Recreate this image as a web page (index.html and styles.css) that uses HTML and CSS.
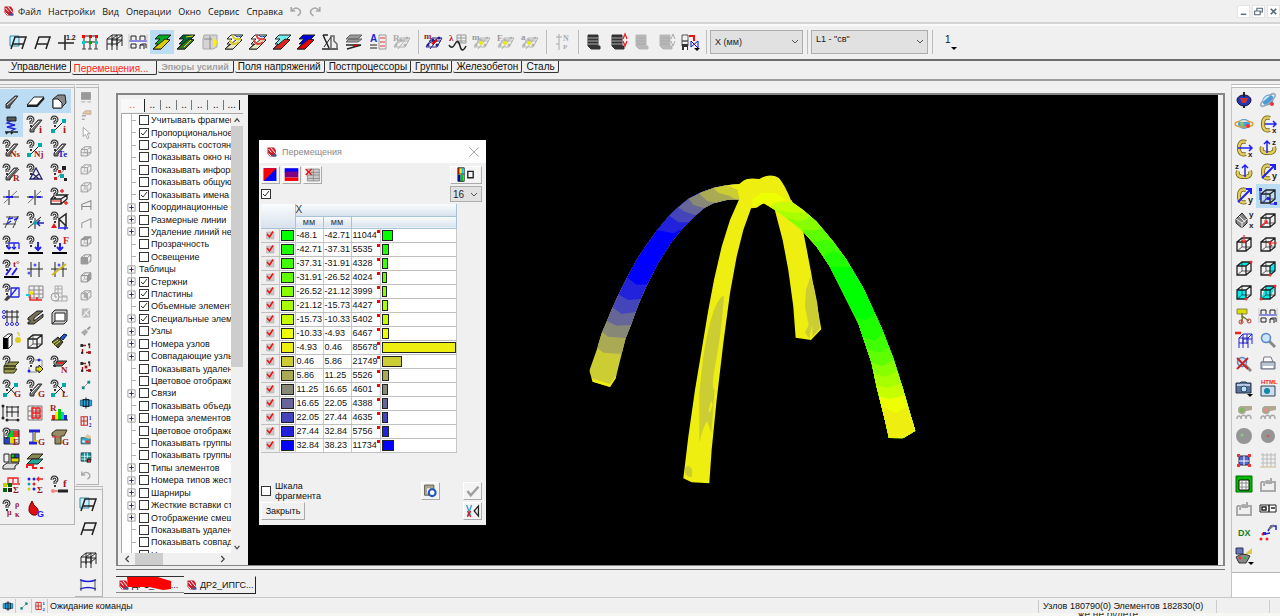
FILE: index.html
```html
<!DOCTYPE html>
<html lang="ru">
  <head>
    <meta charset="utf-8">
    <title>Перемещения</title>
    <link rel="stylesheet" href="styles.css">
  </head>
  <body>
    <header class="menubar">
      <span class="logo" data-icon="logo"></span>
      <button class="menu">Файл</button>
      <button class="menu">Настройки</button>
      <button class="menu">Вид</button>
      <button class="menu">Операции</button>
      <button class="menu">Окно</button>
      <button class="menu">Сервис</button>
      <button class="menu">Справка</button>
      <div class="history" data-tools="undo redo"></div>
      <div class="window-buttons" data-tools="minimize restore close"></div>
    </header>

    <div class="toolbar">
      <div class="group" data-tools="frameBlue frame axis nodes grid3d frames4 stripGreen* stripDark boxYellow isoYellow isoRed stripCyan stripBlue graph layers letterA letterR"></div>
      <div class="group" data-tools="massM wave massGrey forceGrey accGrey"></div>
      <div class="group" data-tools="normal"></div>
      <div class="group" data-tools="film filmRed filmGrey filmGreyA saveNodes"></div>
      <div class="group"><select class="combo" aria-label="Направление"><option>X (мм)</option></select></div>
      <div class="group"><select class="combo combo-wide" aria-label="Загружение"><option>L1 - "св"</option></select></div>
      <button class="number">1<span class="drop"></span></button>
    </div>

    <nav class="tabs">
      <button class="tab">Управление</button>
      <button class="tab tab-active">Перемещения...</button>
      <button class="tab tab-disabled" disabled>Эпюры усилий</button>
      <button class="tab">Поля напряжений</button>
      <button class="tab">Постпроцессоры</button>
      <button class="tab">Группы</button>
      <button class="tab">Железобетон</button>
      <button class="tab">Сталь</button>
    </nav>

    <main class="work">
      <aside class="palette palette-left">
        <div class="palette-grid" data-tools="bar* plate* solid* spring* askBarI askNodeI askNs askNj askTe askR askTri askNodes cross crossBlue askBox axes3 askArrow askSupport askLoad askDown askF askTemp nodes2 nodes2y askMove gridRed clockGrid gridBlue beam cubeSolid bulb cube brush askLayers askCopy askN askG1 askG2 askL gridDims gridRed2 chartR askE beamG beamT press layersRed"></div>
        <div class="palette-grid" data-tools="sumRed sumGrid askf mu drop"></div>
      </aside>
      <div class="palette-column">
        <aside class="palette palette-narrow" data-tools="screen handG pointer wire1 wire2 wire3 wall1 wall2 cubeTop cubeFront cubeSide cubeMid cutBox brushG swap1 swap2 link boxCyan numGrid tableHand tableCyan undo"></aside>
        <aside class="palette palette-frames" data-tools="frameBlue frame grid3d deform"></aside>
      </div>

      <div class="desktop">
        <section class="document">
          <div class="side">
            <div class="side-tabs">
              <button class="side-tab side-tab-active">..</button>
              <button class="side-tab">..</button>
              <button class="side-tab">..</button>
              <button class="side-tab">..</button>
              <button class="side-tab">..</button>
              <button class="side-tab">..</button>
              <button class="side-tab">...</button>
            </div>
            <div class="tree-box">
              <ul class="tree"></ul>
              <div class="scroll scroll-y"><span data-icon="up"></span><i class="thumb"></i><span data-icon="down"></span></div>
            </div>
            <div class="scroll scroll-x"><span data-icon="left"></span><i class="thumb"></i><span data-icon="right"></span></div>
          </div>

          <div class="viewport">
            <svg class="model" viewBox="0 0 970 470" preserveAspectRatio="xMidYMid slice">
              <defs>
                <clipPath id="leg-left"><path d="M515 72L470 76 430 84 395 97 355 117 325 142 298 167 262 210 225 262 200 300 170 355 145 405 127 445 110 485 95 520 80 570 58 632 68 665 120 681 137 655 155 582 167 535 183 495 197 455 213 415 232 373 265 308 305 245 335 208 375 168 402 145 430 130 470 120 515 118z"/></clipPath>
                <clipPath id="leg-right"><path d="M560 100L625 105 665 125 700 150 740 185 790 245 830 300 880 385 910 450 935 505 970 595 1000 690 1020 760 1036 812 998 835 957 834 945 780 920 680 905 610 885 550 865 490 820 400 780 320 740 260 697 212 650 175 610 147 580 130 545 143z"/></clipPath>
              </defs>
              <g transform="translate(322 65) scale(.3333)">
                <!-- back leg -->
                <path fill="#eeee11" d="M613 145L665 120 700 215 722 330 740 430 754 508 723 540 677 533 670 440 655 330 638 240z"/>
                <path fill="#cccc33" d="M721 350L732 380 742 430 750 505 728 530 726 495 718 535 705 518 716 495 705 440 708 390z"/>
                <!-- left leg, bottom to top -->
                <g clip-path="url(#leg-left)">
                  <path fill="#cccc33" d="M0 0H600V700H0z"/>
                  <path fill="#eeee11" d="M50 625L64 655 120 672 140 645V690H50z"/>
                  <path fill="#aaaa55" d="M83 0V565L100 578 160 583H600V0z"/>
                  <path fill="#888877" d="M96 0V515L115 530 172 535H600V0z"/>
                  <path fill="#666699" d="M108 0V482L140 497 188 495H600V0z"/>
                  <path fill="#4444bb" d="M125 0V440L155 462 202 455H600V0z"/>
                  <path fill="#2222dd" d="M143 0V402L175 420 218 416H600V0z"/>
                  <path fill="#0000ff" d="M168 0V350L200 374 238 373H600V0z"/>
                  <path fill="#2222dd" d="M262 0V210L310 220 340 204H600V0z"/>
                  <path fill="#4444bb" d="M296 0V166L325 187 358 187H600V0z"/>
                  <path fill="#666699" d="M324 0V142L345 155 378 166H600V0z"/>
                  <path fill="#888877" d="M355 0V115L370 135 405 145H600V0z"/>
                  <path fill="#aaaa55" d="M386 0V98L410 122 440 130H600V0z"/>
                  <path fill="#cccc33" d="M430 0V84L445 98 480 108 500 120H600V0z"/>
                  <path fill="#eeee11" d="M472 0V76L500 88 520 110H600V0z"/>
                </g>
                <!-- front leg -->
                <path fill="#eeee11" d="M510 112L480 180 455 260 432 360 415 450 395 570 375 690 355 830 340 955 365 967 418 970 425 870 440 720 460 550 480 400 500 290 520 210 545 140z"/>
                <path fill="#cccc33" d="M462 408Q450 405 430 455Q412 510 400 590L388 700 388 850Q398 800 412 784L424 820 434 690Q426 690 430 650Q455 520 462 408zM345 925Q355 910 366 928V950Q355 955 345 940z"/>
                <path fill="#eeee11" d="M424 722L428 735 419 760 416 750z"/>
                <!-- right leg, top to bottom -->
                <g clip-path="url(#leg-right)">
                  <path fill="#eeff00" d="M0 0H1110V1020H0z"/>
                  <path fill="#c8ff00" d="M0 140H600L620 124 665 122H1110V1020H0z"/>
                  <path fill="#a8ff00" d="M0 148H615L650 157 690 158H1110V1020H0z"/>
                  <path fill="#88ff00" d="M0 172H645L690 185 720 172H1110V1020H0z"/>
                  <path fill="#60ff00" d="M0 210H695L740 210 760 204H1110V1020H0z"/>
                  <path fill="#40ff00" d="M0 248H730L765 238 795 246H1110V1020H0z"/>
                  <path fill="#20ff00" d="M0 290H755L790 272 825 288H1110V1020H0z"/>
                  <path fill="#00ff00" d="M0 320H780L845 322H1110V1020H0z"/>
                  <path fill="#20ff00" d="M0 475H860L890 480 915 460H1110V1020H0z"/>
                  <path fill="#40ff00" d="M0 530H875L915 542 942 515H1110V1020H0z"/>
                  <path fill="#60ff00" d="M0 568H890L930 578 960 562H1110V1020H0z"/>
                  <path fill="#88ff00" d="M0 608H903L940 618 975 598H1110V1020H0z"/>
                  <path fill="#a8ff00" d="M0 640H910L945 651 985 632H1110V1020H0z"/>
                  <path fill="#c8ff00" d="M0 675H918L955 685 995 670H1110V1020H0z"/>
                  <path fill="#eeff00" d="M0 708H926L960 718 1005 705H1110V1020H0z"/>
                  <path fill="#eeee11" d="M0 738H935L975 760 1015 738H1110V1020H0z"/>
                </g>
                <!-- hub -->
                <path fill="#eeee11" d="M505 74L520 62Q535 52 568 57Q600 38 627 54Q645 75 665 125L620 127 580 130 560 143 545 145 510 118 503 95z"/>
                <path fill="#eeff00" d="M547 118L575 98 620 100 650 120 620 127 580 130 560 139 547 137z"/>
              </g>
            </svg>

            <section class="dialog">
              <header class="dialog-title">
                <span class="logo" data-icon="logo"></span>
                <h1>Перемещения</h1>
                <button class="dialog-close" aria-label="Закрыть окно" data-icon="cross2"></button>
              </header>
              <div class="dialog-body">
                <div class="dialog-row">
                  <div class="raised" data-tools="diag bands noTable"></div>
                  <div class="raised raised-wide" data-tools="palette"></div>
                </div>
                <div class="dialog-row">
                  <input type="checkbox" class="check" checked aria-label="Включить все">
                  <select class="combo combo-small" aria-label="Количество цветов"><option>16</option></select>
                </div>
                <table class="scale">
                  <colgroup><col class="c-check"><col class="c-swatch"><col class="c-num"><col class="c-num"><col class="c-count"><col></colgroup>
                  <thead>
                    <tr><th colspan="2" rowspan="2"></th><th colspan="4" class="axis">X</th></tr>
                    <tr><th>мм</th><th>мм</th><th colspan="2"></th></tr>
                  </thead>
                  <tbody></tbody>
                </table>
                <div class="dialog-foot">
                  <label class="fragment"><input type="checkbox" class="check"><span>Шкала фрагмента</span></label>
                  <div class="raised raised-settings" data-tools="settings"></div>
                  <div class="raised" data-tools="apply"></div>
                </div>
                <div class="dialog-row">
                  <button class="push">Закрыть</button>
                  <div class="raised" data-tools="scissors"></div>
                </div>
              </div>
            </section>
          </div>
        </section>

        <div class="doc-tabs">
          <button class="doc-tab"><span class="logo" data-icon="logo"></span>ДР1_ИГА...
            <svg class="scribble" viewBox="0 0 46 16"><path fill="#f00" d="M0 2L27 1 44 6 44 14 36 15 22 12 1 12z"/></svg>
          </button>
          <button class="doc-tab doc-tab-active"><span class="logo" data-icon="logo"></span>ДР2_ИПГС...</button>
        </div>
      </div>

      <aside class="palette palette-right">
        <div class="palette-grid" data-tools="top planet planet2 rotX1 rotX2 rotZ1 rotZ2 rotY1 rotY2 isoView* isoXY projFront projTop projSide cubeC1 cubeC2 cubeC3 cubeC4 cutter frames4 gridMove zoom zoomOff printer camera cameraHtml ring1 ring2 disc1 disc2 fit dots greenGrid folder1 folder2 panel dx clip palette2"></div>
      </aside>
    </main>

    <footer class="status">
      <div class="status-tools" data-tools="boxCyan link numGrid"></div>
      <span class="status-text">Ожидание команды</span>
      <span class="status-count">Узлов 180790(0) Элементов 182830(0)</span>
      <span class="status-cell"></span>
      <span class="status-end"></span>
    </footer>
    <div class="behind"><span>же не будете</span></div>

    <script src="icons.js"></script>
    <script src="app.js"></script>
  </body>
</html>
```

FILE: styles.css
```css
* {
  box-sizing: border-box;
}
body {
  margin: 0;
  height: 100vh;
  display: flex;
  flex-direction: column;
  background: #f0f0f0;
  color: #111;
  font-family: "Liberation Sans", Arial, sans-serif;
  font-size: 10px;
  overflow: hidden;
}
button {
  font: inherit;
  color: inherit;
  background: none;
  border: none;
  padding: 0;
  white-space: nowrap;
}
svg {
  display: block;
}
.logo {
  width: 10px;
  height: 10px;
  flex: none;
}
.tool {
  width: 24px;
  height: 24px;
  display: flex;
  align-items: center;
  justify-content: center;
  flex: none;
}
.tool svg {
  width: 20px;
  height: 20px;
}
.tool-on {
  background: #bcdcf4;
}

/* menu */
.menubar {
  height: 24px;
  flex: none;
  display: flex;
  align-items: center;
  padding-left: 4px;
  border-bottom: 2px solid #d4d4d4;
  font-family: "Open Sans", sans-serif;
  font-size: 9px;
}
.menu {
  margin-left: 7px;
}
.menubar .logo + .menu {
  margin-left: 4px;
}
.history {
  display: flex;
  margin-left: 4px;
}
.history .tool {
  width: 19px;
}
.history .tool svg {
  width: 16px;
  height: 16px;
}
.window-buttons {
  display: flex;
  gap: 2px;
  margin-left: auto;
}
.window-buttons .tool {
  width: 13px;
  height: 13px;
  background: #fff;
  border: 1px solid #e4e4e4;
}
.window-buttons svg {
  width: 11px;
  height: 11px;
}

/* main toolbar */
.toolbar {
  height: 37px;
  flex: none;
  display: flex;
  align-items: center;
  padding: 0 0 2px 6px;
  border-top: 2px solid #fafafa;
  border-bottom: 2px solid #6e6e6e;
}
.group {
  display: flex;
  align-items: center;
  height: 24px;
  padding-right: 4px;
  margin-right: 3px;
  border-right: 1px solid #bdbdbd;
}
.combo {
  width: 93px;
  height: 24px;
  padding: 0 4px;
  color: #222;
  font: 9px "Liberation Sans", Arial, sans-serif;
  border: 1px solid #adadad;
  border-radius: 0;
  appearance: none;
  background: #e1e1e1 url("data:image/svg+xml,%3Csvg xmlns='http://www.w3.org/2000/svg' width='8' height='5'%3E%3Cpath d='M1 1l3 3 3-3' fill='none' stroke='%23555'/%3E%3C/svg%3E") no-repeat right 3px center;
}
.combo-wide {
  width: 117px;
  padding-bottom: 6px;
}
.number {
  display: flex;
  align-items: flex-start;
  height: 16px;
  margin-left: 9px;
}
.drop {
  align-self: flex-end;
  border: 3px solid transparent;
  border-top-color: #000;
  border-bottom: none;
}

/* tabs under the toolbar */
.tabs {
  height: 20px;
  flex: none;
  display: flex;
  align-items: flex-start;
  padding-left: 8px;
  border-bottom: 2px solid #9c9c9c;
}
.tab {
  height: 12px;
  padding: 0 3px;
  margin-right: 1px;
  line-height: 10px;
  border-right: 1px solid #333;
  border-bottom: 1px solid #333;
  border-radius: 0 0 2px 2px;
}
.tab-active {
  height: 14px;
  padding: 2px 8px 0 2px;
  color: #f22;
}
.tab-disabled {
  padding: 0 4px 0 3px;
  color: #a0a0a0;
  font-weight: bold;
  font-size: 9px;
}

/* work area */
.work {
  flex: 1;
  min-height: 0;
  display: flex;
  align-items: flex-start;
  padding-top: 3px;
}
.palette {
  border-top: 4px double #bbb;
  border-right: 1px solid #b5b5b5;
  border-bottom: 1px solid #b5b5b5;
}
.palette-grid {
  display: grid;
  grid-template-columns: repeat(3, 24px);
}
.palette-left {
  width: 75px;
  padding: 1px 0 3px;
}
.palette-left .palette-grid {
  margin-left: -1px;
}
.palette-column {
  width: 30px;
  flex: none;
}
.palette-narrow {
  width: 23px;
  margin-left: 1px;
}
.palette-narrow .tool {
  width: 20px;
  height: 18px;
}
.palette-narrow svg {
  width: 14px;
  height: 14px;
}
.palette-frames {
  width: 28px;
  margin-top: 1px;
  padding-top: 2px;
}
.palette-frames .tool {
  width: 26px;
}
.palette-frames .tool:nth-child(3) {
  margin-top: 8px;
}
.palette-right {
  width: 49px;
  align-self: stretch;
  border-right: none;
  border-bottom: none;
  border-left: 1px solid #c4c4c4;
  display: flex;
  flex-direction: column;
  background: #fff;
}
.palette-right .palette-grid {
  grid-template-columns: repeat(2, 24px);
  padding-bottom: 4px;
  background: #f0f0f0;
  border-bottom: 1px solid #b5b5b5;
}
.desktop {
  flex: 1;
  min-width: 0;
  align-self: stretch;
  display: flex;
  flex-direction: column;
  padding: 9px 6px 0 11px;
}
.document {
  flex: 1;
  min-height: 0;
  display: flex;
  border: 2px solid #858585;
  border-bottom-width: 1px;
  padding-right: 5px;
  box-shadow: 0 3px 0 #eee, 0 4px 0 #777;
}

/* tree panel */
.side {
  width: 130px;
  flex: none;
  display: flex;
  flex-direction: column;
  padding: 3px 5px 0 3px;
}
.side-tabs {
  display: flex;
  height: 14px;
  margin-right: 3px;
}
.side-tab {
  width: 16px;
  height: 10px;
  align-self: center;
  line-height: 8px;
  border-right: 1px solid #777;
}
.side-tab-active {
  width: 24px;
  height: 13px;
  color: #f52;
  background: #f8f8f8;
  border-right: 1px solid #222;
}
.side-tab:last-child {
  border-right: 1px solid #222;
}
.tree-box {
  flex: 1;
  min-height: 0;
  display: flex;
  margin-top: 1px;
  background: #fff;
  border: 1px solid #aaa;
  border-right: none;
  border-bottom: none;
  overflow: hidden;
}
.tree {
  flex: 1;
  min-width: 0;
  /* the last row is cut by the panel's edge */
  height: calc(100% + 8px);
  margin: 0;
  padding: 0;
  display: grid;
  grid-template-rows: repeat(36, minmax(12px, 1fr));
  overflow: hidden;
  list-style: none;
  font-size: 9px;
}
.branch {
  display: flex;
  align-items: center;
  min-height: 0;
  padding-left: 5px;
  white-space: nowrap;
  overflow: hidden;
  background: linear-gradient(90deg, transparent 9px, #bbb 9px, #bbb 10px, transparent 10px);
}
.branch label {
  display: flex;
  align-items: center;
  gap: 2px;
}
.expander {
  width: 9px;
  height: 9px;
  flex: none;
  margin-right: 3px;
}
.check {
  flex: none;
  width: 10px;
  height: 10px;
  margin: 0;
  appearance: none;
  background: #fff;
  border: 1px solid #333;
}
.check:checked {
  background: #fff url("data:image/svg+xml,%3Csvg xmlns='http://www.w3.org/2000/svg' width='8' height='8'%3E%3Cpath d='M1 4l2 2 4-5' fill='none' stroke='%23333'/%3E%3C/svg%3E") no-repeat;
}
.scroll {
  display: flex;
  align-items: center;
  background: #f0f0f0;
}
.scroll svg {
  width: 12px;
  height: 12px;
}
.scroll .thumb {
  background: #cdcdcd;
}
.scroll-y {
  width: 12px;
  flex-direction: column;
}
.scroll-y .thumb {
  width: 12px;
  height: 55%;
  margin-bottom: auto;
}
.scroll-x {
  height: 12px;
}
.scroll-x .thumb {
  width: 28px;
  height: 12px;
  margin: 0 auto 0 2px;
}
.scroll-x span:last-child {
  margin-right: 14px;
}

/* model view */
.viewport {
  position: relative;
  flex: 1;
  min-width: 0;
  background: #000;
}
.model {
  width: 100%;
  height: 100%;
}

/* colour scale dialog */
.dialog {
  position: absolute;
  top: 45px;
  left: 11px;
  width: 227px;
  background: #f0f0f0;
}
.dialog-title {
  height: 23px;
  display: flex;
  align-items: center;
  padding: 0 7px 0 8px;
  background: #fff;
}
.dialog-title h1 {
  margin: 0 auto 0 5px;
  font-size: 9px;
  font-weight: normal;
  color: #888;
}
.dialog-close svg {
  width: 10px;
  height: 10px;
}
.dialog-body {
  padding: 3px 4px 3px 2px;
}
.dialog-row {
  display: flex;
  align-items: center;
  justify-content: space-between;
  margin-bottom: 2px;
}
.raised {
  display: flex;
  gap: 2px;
}
.raised .tool {
  width: 19px;
  height: 18px;
  background: #f4f4f4;
  border: 1px solid #fff;
  border-right-color: #aaa;
  border-bottom-color: #aaa;
}
.raised .tool svg {
  width: 18px;
  height: 18px;
}
.raised-wide .tool {
  width: 32px;
}
.combo-small {
  width: 32px;
  height: 16px;
  padding: 0 2px;
  font-size: 10px;
}
.scale {
  width: 196px;
  table-layout: fixed;
  border-collapse: collapse;
  background: #fff;
  font-size: 9px;
}
.c-check {
  width: 18px;
}
.c-swatch {
  width: 16px;
}
.c-num {
  width: 28px;
}
.c-count {
  width: 29px;
}
.scale th {
  height: 12px;
  padding: 0;
  line-height: 10px;
  font-weight: normal;
  color: #333;
  border-right: 1px solid #a9c3d6;
  border-bottom: 1px solid #a9c3d6;
  background: linear-gradient(#fafcfe, #d8e2ec);
}
.scale th.axis {
  text-align: left;
  font-size: 10px;
}
.scale td {
  height: 14px;
  padding: 0 1px;
  line-height: 12px;
  white-space: nowrap;
  border-right: 1px solid #c8c8c8;
  border-bottom: 1px solid #c0c0c0;
}
.scale td.mark {
  padding: 0 4px;
  background: #eee;
}
.mark svg {
  width: 10px;
  height: 10px;
}
.swatch {
  display: block;
  height: 11px;
  border: 1px solid #222;
}
.count {
  background: linear-gradient(#f00, #f00) no-repeat right 0 top 1px / 3px 3px;
}
.dialog-foot {
  display: flex;
  align-items: center;
  margin: 28px 0 1px;
}
.fragment {
  display: flex;
  align-items: center;
  gap: 4px;
  width: 80px;
  margin-right: auto;
  font-size: 9px;
  line-height: 10px;
}
.raised-settings {
  margin-right: 23px;
}
.push {
  width: 44px;
  height: 18px;
  font-size: 9px;
  border: 1px solid #fff;
  border-right-color: #aaa;
  border-bottom-color: #aaa;
}

/* document tabs */
.doc-tabs {
  display: flex;
  height: 18px;
  margin: 10px 0 3px;
}
.doc-tab {
  position: relative;
  display: flex;
  align-items: center;
  gap: 3px;
  width: 68px;
  height: 17px;
  padding-left: 3px;
  overflow: hidden;
  border-top: 1px solid #333;
  border-bottom: 1px solid #888;
  font-size: 9px;
}
.doc-tab-active {
  width: 72px;
  height: 18px;
  border-top-color: transparent;
  border-right: 1px solid #222;
  border-bottom: 1px solid #222;
}
.scribble {
  position: absolute;
  top: -2px;
  left: 11px;
  width: 46px;
  height: 16px;
}

/* status bar */
.status {
  height: 16px;
  flex: none;
  display: flex;
  align-items: center;
  padding-top: 1px;
  border-top: 1px solid #c8c8c8;
}
.status-tools {
  display: flex;
  width: 47px;
}
.status-tools .tool {
  width: 16px;
  height: 14px;
  border-right: 1px solid #ccc;
}
.status-tools svg {
  width: 12px;
  height: 12px;
}
.status-text {
  flex: 1;
  padding-left: 3px;
  font-size: 9px;
}
.status-count {
  width: 179px;
  padding-left: 4px;
  font-size: 9px;
  line-height: 13px;
  border-left: 1px solid #ccc;
  border-right: 1px solid #ccc;
}
.status-cell {
  width: 53px;
  height: 13px;
  border-right: 1px solid #ccc;
}
.status-end {
  width: 10px;
}
.behind {
  height: 3px;
  flex: none;
  display: flex;
  justify-content: flex-end;
  padding-right: 142px;
  overflow: hidden;
  color: #333;
  background: #f6f6f2;
  line-height: 3px;
}
```

FILE: icons.js
```javascript
// small drawing helpers, every icon lives on a 20x20 grid
const line = (d, c = '#222', w = 1) => `<path d="${d}" fill="none" stroke="${c}" stroke-width="${w}"/>`;
const area = (d, f, c = 'none') => `<path d="${d}" fill="${f}" stroke="${c}"/>`;
const dot = (x, y, c, r = 1.5) => `<circle cx="${x}" cy="${y}" r="${r}" fill="${c}"/>`;
const sq = (x, y, c, s = 3) => `<rect x="${x}" y="${y}" width="${s}" height="${s}" fill="${c}"/>`;
const text = (x, y, s, c = '#a01818', size = 9, f = 'Liberation Serif') =>
  `<text x="${x}" y="${y}" fill="${c}" font-family="${f}" font-weight="bold" font-size="${size}">${s}</text>`;

const ask = line('M3 5Q3 2 5 2Q8 2 8 5Q8 6 6 7V9', '#333', 3) + line('M3 5Q3 2 5 2Q8 2 8 5Q8 6 6 7V9', '#ddd', 1) + sq(5, 10, '#333', 2);
const rod = area('M5 14L13 5H17L9 15V17H5z', '#777', '#333') + line('M6 14L14 6', '#eee');
const link = line('M4 17L16 5') + sq(2, 14, '#0aa', 4) + sq(13, 4, '#0aa', 4);
const floor = line('M3 18H18', '#000', 2);
const mesh = (c) => line('M3 3H17M3 8H17M3 13H17M3 17H17M3 3V17M8 3V17M13 3V17M17 3V17', c);
const wire = (c) => line('M3 8H12V17H3zM3 8L8 4H17V13L12 17M12 8L17 4', c, 1.3) + line('M8 4V13H17M3 17L8 13', c, .7);
const strip = (a, b) => area('M7 3H19L15 7 18 8 9 17H1L6 12H3L8 7H3z', a, '#222') + area('M18 8L9 17H1L13 7z', b, '#222');
const iso = (c) => strip('#fff', '#e8e8c0') + line('M9 3Q8 8 17 7M6 8Q8 15 15 10', c, 2) + line('M11 3Q12 6 17 4', '#14a');
const truss = (c) => line('M2 15L8 6H18L13 15zM4 12L15 6M6 17L13 8M5 9H17', c) + [[4, 13], [9, 8], [15, 6], [13, 13]].map((p) => dot(p[0], p[1], c)).join('');
const filmBody = (c) => area('M4 3H14V14H16V17H7L4 14z', c, c) + line('M4 6H14M4 9H14M4 12H14', '#aaa');
const orbit = (a, b) => `<ellipse cx="10" cy="10" rx="6" ry="5" fill="${a}"/>` + `<ellipse cx="10" cy="10" rx="9" ry="3" fill="none" stroke="${b}" stroke-width="1.500"/>` + area('M5 8Q10 4 14 8z', '#cfe6f8');
const ringX = line('M12 4Q5 2 5 10Q5 18 12 16', '#665500', 4) + line('M12 4Q5 2 5 10Q5 18 12 16', '#e0cc60', 2.5);
const ringZ = line('M4 9Q2 15 10 15Q18 15 16 9', '#665500', 4) + line('M4 9Q2 15 10 15Q18 15 16 9', '#e0cc60', 2.5);
const lens = line('M11 11L17 17', '#888', 3) + `<circle cx="8" cy="8" r="4.500" fill="#cfe4fa" stroke="#5588cc" stroke-width="1.500"/>`;
const cam = area('M2 5H6L7 4H12L13 5H17V15H2z', '#5b7398', '#234') + area('M3 6H16V8H3z', '#b8cce8') + `<circle cx="10" cy="11" r="3" fill="#bfe0f8" stroke="#246"/>`;
const frameLine = line('M3 17L7 5H18L14 17M5 12H16', '#222', 1.5);
const cubeC = (d) => area(d, '#0ee') + wire('#222');
const swapBase = line('M5 5H10M15 5V9M5 10V15M10 15H15', '#a01818', 2) + sq(2, 3, '#222', 4) + sq(13, 13, '#a01818', 4) + sq(13, 2, '#222') + sq(3, 14, '#222');
const reel = (c) => line('M3 17A2 3 0 0 1 7 17A2 3 0 0 1 12 17A2 3 0 0 1 17 17', '#aaa', 1.5) + dot(8, 8, '#a4a890', 4) + area('M9 4H18V8L12 9z', '#b0a890') + dot(8, 8, c, 2);
const folder = line('M3 8H6M14 8H17V17H3V8', '#aaa', 2) + line('M6 12Q6 5 13 8M13 4V9H8', '#aaa', 2);

const icons = {
  logo: area('M1 1H14L18 7V19H6L1 13z', '#c9202c') + line('M3 4L9 11M8 2L17 13M3 13L8 18', '#fff', 2) + area('M11 15H19V19H11z', '#2b5aa8'),
  undo: line('M4 5V10H9M4 10Q10 3 15 9Q17 13 12 16', '#a8a8a8', 2),
  redo: line('M16 5V10H11M16 10Q10 3 5 9Q3 13 8 16', '#a8a8a8', 2),
  minimize: line('M5 15H15', '#567', 2.5),
  restore: line('M7 8V4H17V11H13M3 9H13V16H3z', '#567', 2),
  close: line('M5 5L15 15M15 5L5 15', '#567', 3),
  cross2: line('M1 1L19 19M19 1L1 19', '#888', 1.5),
  up: line('M6 13L10 8 14 13', '#444', 2),
  down: line('M6 8L10 13 14 8', '#444', 2),
  left: line('M13 5L8 10 13 15', '#444', 2),
  right: line('M7 5L12 10 7 15', '#444', 2),

  // top toolbar
  frameBlue: area('M2 4H11V14H2z', '#c8f0fa', '#38a') + frameLine,
  frame: frameLine,
  axis: line('M2 11H18M9 3V18', '#222', 1.5) + text(10, 8, '1.2', '#222', 7, 'Liberation Sans'),
  nodes: line('M4 4H16M4 10H16M4 4V17M10 4V17M16 4V17', '#222') + sq(2, 3, '#f00') + sq(9, 3, '#f00') + sq(15, 3, '#f00') + sq(9, 9, '#0a0') + sq(2, 9, '#0cc') + sq(15, 9, '#0cc') + line('M2 17H6M8 17H12M14 17H18', '#444'),
  grid3d: line('M3 7H13V18M3 7V18M8 7V18M3 12H13M3 7L8 3H18V14M13 7L18 3M8 7L13 3M13 12L18 8M13 3V14M8 3V14M8 8H18', '#222', 1),
  frames4: line('M1 9H19', '#22c') + line('M1 2V17M19 2V17', '#bbb', .7) + line('M3 8V4H8V8M12 8V4H17V8M3 12H8V16H3zM12 17V13L14 12H18V16M12 13H16V17', '#222'),
  stripGreen: strip('#0a2', '#dc0'),
  stripDark: strip('#063', '#372') + line('M10 5L17 4M8 15L15 8', '#dd0'),
  boxYellow: area('M4 3H17V15L13 17H3V7z', '#d4d4d4', '#aaa') + area('M13 6L17 9 16 14 13 15z', '#fe0') + line('M10 4V17M4 7H12', '#888'),
  isoYellow: iso('#dc2'),
  isoRed: iso('#d44'),
  stripCyan: strip('#7ee', '#d22'),
  stripBlue: strip('#00d', '#e00'),
  graph: line('M3 3L9 16M3 3H8M2 17H18', '#222', 1.5) + line('M11 17V4H14V9L17 12V17z', '#666', 1.5) + line('M11 5L4 15', '#222'),
  layers: area('M6 3H18L14 7H2zM5 7H18L14 10H2z', '#999', '#666') + line('M2 13H17L3 17', '#222', 1.5) + line('M9 14L14 13', '#c00', 1.5),
  letterA: text(2, 10, 'A', '#22d', 10, 'Liberation Sans') + line('M11 3H18V17H11z', '#999') + line('M12 6H17M12 10H17M12 14H17', '#d33') + line('M2 13H9M2 16H9', '#888', 2),
  letterR: text(1, 9, 'R', '#aaa') + truss('#b0b0b0'),
  massM: truss('#228') + text(0, 7, 'm') + line('M8 12L13 8', '#e00', 2),
  wave: text(1, 9, 'λ') + line('M9 3H18V11H9zM9 6H18M9 9H18M13 3V11', '#999') + line('M1 13Q4 18 7 12T12 14T18 14', '#222', 1.5),
  massGrey: truss('#b4b4b4') + text(0, 8, 'm', '#999') + dot(9, 11, '#ee0', 2),
  forceGrey: truss('#b4b4b4') + text(1, 9, 'F', '#999') + dot(9, 11, '#ee0', 2),
  accGrey: truss('#b4b4b4') + text(1, 8, 'a', '#999') + dot(9, 11, '#ee0', 2),
  normal: line('M7 2V18M4 5H10M4 12H7', '#aaa') + text(11, 9, 'N', '#aaa', 8) + text(11, 17, 'P', '#aaa', 7),
  film: filmBody('#333'),
  filmRed: filmBody('#333') + line('M15 7L17 2 19 7M15 9L17 14 19 9', '#e22', 1.3),
  filmGrey: filmBody('#b8b8b8'),
  filmGreyA: filmBody('#b8b8b8') + line('M15 7L17 2 19 7M15 9L17 14 19 9', '#aaa'),
  saveNodes: line('M2 3H8V9H2zM2 9H8V14H2z', '#555') + line('M9 4H14V9', '#e11', 2) + line('M11 15L18 9V16M11 9L18 16M11 9V15', '#11b') + area('M2 12H8V18H2z', '#333') + sq(4, 15, '#fff', 3) + area('M14 16H20L17 19z', '#000'),

  // left palette
  bar: area('M5 13L14 5H17L9 15V17H5z', '#555', '#333') + line('M6 14L15 6', '#eee'),
  plate: area('M2 14L9 6H19L12 14z', '#fff', '#222') + line('M2 15H12L19 7', '#222', 2),
  solid: area('M4 8L9 4H16L17 12 12 17H4z', '#888', '#222') + area('M4 8H9L13 12V17H4z', '#fff', '#222'),
  spring: area('M6 2H15V6H6z', '#555', '#222') + line('M10 6L6 8 14 10 6 12 14 14 10 16', '#22d', 1.3) + line('M4 17H17M5 19L7 17M10 19L12 17', '#222', 1.5),
  askBarI: rod + ask + text(14, 18, 'i', '#a01818', 11),
  askNodeI: link + ask + text(14, 18, 'i', '#a01818', 11),
  askNs: rod + ask + text(9, 18, 'Ns'),
  askNj: link + ask + text(9, 18, 'Nj'),
  askTe: rod + ask + text(9, 18, 'Te', '#22c'),
  askR: rod + line('M8 17L18 6', '#333') + ask + text(12, 18, 'R'),
  askTri: line('M11 5L5 16H17zM8 11L14 16M14 11L8 16', '#226', 1.3) + ask,
  askNodes: sq(13, 3, '#222', 4) + sq(9, 7, '#c22') + sq(5, 14, '#c22') + sq(11, 11, '#0aa', 4) + sq(15, 15, '#222') + ask + line('M9 14L15 7', '#888'),
  cross: line('M2 10H18M8 3V18') + line('M3 16L16 4', '#777') + line('M5 10H12', '#22e', 2),
  crossBlue: line('M2 10H18M10 3V18') + line('M3 16L16 4', '#777') + line('M4 10H8M12 10H16', '#22e', 2),
  askBox: line('M2 12H12V17H2zM2 12L6 8H18L12 12M18 8V12L12 17', '#222', 1.3) + line('M3 14H12', '#e22') + ask + line('M11 4H15M13 2V6M15 16H19M17 14V18', '#e22', 1.3),
  axes3: line('M5 6H18M2 13H15M4 17L9 5M12 17L17 5', '#444') + line('M7 8L12 7M6 13L10 10M13 9L17 7', '#22e', 1.5),
  askArrow: line('M3 17L16 6M10 7V18') + line('M19 12H12M15 9L12 12L15 15', '#22b', 1.5) + ask + dot(10, 12, '#0aa', 2),
  askSupport: line('M10 8L17 3V15L10 8V16', '#222', 1.5) + ask + area('M2 17L5 12 8 17z', '#e11') + line('M9 17H19M16 15V19', '#22e', 1.3),
  askLoad: ask + line('M8 8H18M8 8V14M13 8V14M18 8V14M6 12L8 14L10 12M11 12L13 14L15 12', '#22e', 1.3) + floor,
  askDown: ask + line('M13 7V15M10 12L13 15 16 12', '#22e', 2) + floor,
  askF: ask + line('M11 8V15M8 12L11 15 14 12', '#22e', 2) + text(14, 9, 'F', '#c22', 10) + floor,
  askTemp: ask + text(12, 8, 't°', '#a01818', 9) + line('M10 9L5 16M16 9L11 16', '#22e', 2) + floor,
  nodes2: line('M2 10H18M6 3V18M14 3V18') + dot(10, 6, '#55e') + dot(4, 14, '#55e'),
  nodes2y: line('M2 10H18M6 3V18M14 3V18') + line('M3 16L17 5', '#cb2', 2) + dot(10, 6, '#55e'),
  askMove: line('M8 15L16 5M10 5H18V14M10 14H18M10 5V14', '#22e', 1.3) + area('M3 17L7 12 10 14 6 18z', '#444') + ask,
  gridRed: line('M4 3H18V15H4zM9 3V15M14 3V15M4 7H18M4 11H18', '#888') + line('M5 11V17H17M12 14V17', '#e22', 1.5) + dot(6, 10, '#fd0', 2) + line('M1 12H5', '#0cf', 2),
  clockGrid: line('M6 3H13V13H18V18H6zM6 6H13M6 10H13M9 3V18M13 13V18M6 14H18', '#aaa') + `<circle cx="6" cy="14" r="4" fill="#eee" stroke="#999"/>` + line('M6 11V14H8', '#999'),
  gridBlue: line('M6 3V15M11 3V15M16 3V15M4 5H18M4 10H18', '#222') + [[3, 5], [3, 10], [6, 17], [11, 17], [16, 17]].map((p) => `<circle cx="${p[0]}" cy="${p[1]}" r="1.500" fill="#fff" stroke="#22d"/>`).join(''),
  beam: area('M3 11L12 4H18L9 11V14L18 7V10L9 17H3V15H5V13H3z', '#776f5a', '#222'),
  cubeSolid: area('M3 6L6 3H18V14L15 17H3z', '#ccc', '#222') + area('M6 6H16V14H6z', '#fff', '#222') + line('M3 17L6 14', '#222'),
  bulb: area('M2 7H7V18H2z', '#000') + area('M2 7L7 3H11L7 7V18L11 14V3', '#fff', '#222') + dot(17, 9, '#dc2', 3) + line('M16 2H18V5', '#cb2'),
  cube: wire('#222'),
  brush: area('M3 11L9 6 14 11 9 17z', '#553', '#222') + line('M3 13L9 9M5 15L11 10', '#dd4') + area('M11 7L15 3 18 4 14 9z', '#25c', '#124'),
  askLayers: area('M6 7H18L14 11H3zM3 11H15L13 14H3zM3 14H16L13 18H3z', '#995', '#331') + ask,
  askCopy: line('M10 5H17V12M4 12V17H12', '#888') + ask + dot(14, 5, '#22e') + dot(4, 16, '#22e') + area('M11 12H14V10L18 14 14 18V16H11z', '#dd0', '#222'),
  askN: area('M4 11L9 6H18L13 11z', '#777', '#222') + ask + line('M8 8H15', '#e22', 2) + text(12, 18, 'N'),
  askG1: link + line('M6 6L15 16', '#222') + ask + text(13, 18, 'G'),
  askG2: rod + ask + text(13, 18, 'G'),
  askL: link + line('M8 6L16 14', '#222') + ask + text(13, 18, 'L'),
  gridDims: line('M5 4H18M5 9H18M6 3V14M11 3V14M17 3V14M2 4V15M5 17H18', '#222') + dot(2, 3, '#222') + dot(2, 15, '#222') + dot(6, 17, '#222') + dot(17, 17, '#222'),
  gridRed2: mesh('#777') + line('M7 5H15V15H7zM7 10H15M11 5V15', '#e22', 1.5),
  chartR: text(1, 8, 'R') + area('M3 12H6V17H3z', '#e22') + area('M6 9H9V17H6z', '#fe0') + area('M9 6H12V17H9z', '#0c0') + area('M12 9H15V17H12z', '#0cc') + area('M15 12H18V17H15z', '#22e') + line('M2 17H19', '#222'),
  askE: area('M6 4H12V10H6z', '#0c3') + area('M12 4H18V10H12z', '#e33') + area('M3 10H9V17H3z', '#24d') + area('M9 10H14V16H9z', '#dd0') + line('M3 3H18V17H3z') + ask + text(12, 18, 'E'),
  beamG: line('M4 4H15M9 4V15M4 16H12', '#22c', 3) + line('M9 5V14H13', '#cc2', 1.5) + text(13, 18, 'G'),
  beamT: area('M3 6L7 3H18L15 9H12V17H6V9H3z', '#998a66', '#332') + line('M3 10H11', '#e33') + text(13, 18, 'G'),
  press: area('M3 3H8V11H3z', '#eee', '#222') + area('M10 3H14V7H10z', '#0c0', '#222') + area('M14 3H18V7H14z', '#24d', '#222') + area('M10 7H18V11H10z', '#dd0', '#222') + area('M2 15L6 12H18L14 15V18H2z', '#ddd', '#222'),
  layersRed: area('M7 3H18L13 8H2z', '#885', '#222') + area('M7 8H18L13 13H2z', '#2a9', '#222') + line('M2 17V14H8V17H12M15 17H18', '#e22', 2),
  sumRed: line('M7 8V3H17V8M12 3V8M2 9H19', '#e22', 1.3) + sq(2, 8, '#cc0', 4) + sq(7, 8, '#060', 4) + sq(2, 13, '#060', 4) + sq(7, 13, '#222', 4) + text(12, 18, 'Σ'),
  sumGrid: dot(4, 4, '#22e') + dot(9, 4, '#22e') + dot(4, 9, '#0aa') + dot(9, 9, '#e22') + dot(4, 14, '#cc0') + dot(9, 14, '#22e') + line('M12 4H18M14 2L12 4L14 6', '#e22', 1.3) + text(12, 18, 'Σ'),
  askf: ask + text(14, 12, 'f', '#a01818', 11) + line('M3 16H10', '#e22') + line('M9 16H19', '#222', 3) + dot(4, 16, '#e88', 2),
  mu: ask + text(6, 16, 'μ', '#a01818', 8) + text(14, 8, 'ρ', '#a01818', 8) + text(14, 18, 'κ', '#a01818', 8),
  drop: area('M7 2Q8 6 12 9Q15 13 11 16Q6 17 4 12Q3 8 7 2z', '#d11', '#700') + text(12, 18, 'G', '#22e', 9, 'Liberation Sans'),

  // narrow palette
  screen: area('M3 3H17V14H3z', '#999') + line('M3 17H9M12 17H17', '#bbb', 2),
  handG: area('M5 8L9 4H17V9H12z', '#e0c8a0', '#b99') + line('M4 11H10M4 16H8', '#aaa', 2),
  pointer: area('M6 2V15L9 12 12 18 14 17 12 11H16z', '#fff', '#888'),
  wire1: wire('#999') + line('M3 12H17', '#999'),
  wire2: wire('#999'),
  wire3: wire('#999') + area('M8 8H13V14H8z', '#ccc'),
  wall1: line('M4 17V9L17 4V17M4 12H17', '#888', 1.5),
  wall2: line('M4 17V10L17 4V17', '#999', 1.5),
  cubeTop: wire('#888') + area('M3 8L8 4H17L12 8z', '#999'),
  cubeFront: wire('#888') + area('M3 8H12V17H3z', '#999'),
  cubeSide: wire('#888') + area('M12 8L17 4V13L12 17z', '#999'),
  cubeMid: wire('#999') + area('M7 5L12 7V16L7 13z', '#aaa'),
  cutBox: area('M4 4L16 3V16L4 17z', '#bbb') + line('M4 17L16 3M8 8L14 14', '#eee', 2),
  brushG: area('M3 12L9 7 13 11 8 17z', '#aaa') + area('M11 7L15 3 17 5 13 9z', '#999'),
  swap1: swapBase,
  swap2: swapBase + sq(8, 8, '#a01818', 4),
  link: line('M6 14L14 6', '#777') + sq(4, 12, '#18818a', 4) + sq(12, 4, '#18818a', 4),
  boxCyan: area('M2 6H18V14H2z', '#2ad', '#146') + line('M10 2V18M6 5H14V15H6z', '#123', 1.5),
  numGrid: line('M3 4H12V16H3zM3 10H12M7 4V16', '#c22', 1.5) + text(14, 9, '1', '#22c', 8) + text(14, 18, '2', '#22c', 8),
  tableHand: area('M3 8H16V17H3z', '#3ac', '#245') + area('M8 8L12 3 17 6V10z', '#e6c49a') + sq(5, 12, '#fff') + sq(10, 12, '#e33', 4),
  tableCyan: area('M3 4H17V16H3z', '#17909a', '#134') + line('M3 9H17M3 13H17M8 4V16M12 4V16', '#fff') + sq(11, 12, '#222', 6) + sq(13, 14, '#e33'),
  deform: line('M2 6Q10 9 18 6M2 15Q10 12 18 15', '#22d', 1.5) + line('M3 5V17M17 5V17', '#555'),

  // right palette
  top: area('M3 10A7 6 0 0 0 17 10A7 5 0 0 0 3 10z', '#2338b8', '#113') + area('M6 8H14L12 13H8z', '#c33') + line('M10 2V7M10 16V18', '#222', 2),
  planet: '<g transform="rotate(-40 10 10)">' + orbit('#4a9ad8', '#9ab') + '</g>' + dot(14, 14, '#e33', 2),
  planet2: orbit('#4a9ad8', '#d8a040') + dot(8, 10, '#8c6', 2) + dot(14, 12, '#e33', 2),
  rotX1: ringX + line('M7 10H18M15 7L18 10L15 13', '#22e', 1.5) + text(14, 19, 'x', '#222', 8, 'Liberation Sans'),
  rotX2: ringX + line('M4 10H18M15 7L18 10L15 13', '#22e', 1.5) + text(14, 19, 'x', '#222', 8, 'Liberation Sans'),
  rotZ1: ringZ + line('M9 15V3M6 6L9 3L12 6', '#22e', 1.5) + text(14, 7, 'z', '#222', 8, 'Liberation Sans'),
  rotZ2: ringZ + line('M11 15V3M8 6L11 3L14 6', '#22e', 1.5) + text(1, 7, 'z', '#222', 8, 'Liberation Sans'),
  rotY1: ringX + line('M4 16L17 3M12 3H17V8', '#22e', 2) + text(14, 17, 'y', '#222', 9, 'Liberation Sans'),
  rotY2: ringX + line('M4 16L17 3M12 3H17V8', '#22e', 2) + text(14, 17, 'y', '#222', 9, 'Liberation Sans'),
  isoView: wire('#222') + line('M2 14V3M12 18H19M5 17L10 11', '#22e') + sq(1, 2, '#22e') + sq(16, 16, '#22e') + sq(9, 11, '#22e'),
  isoXY: area('M2 9L8 3 13 9V13L8 18 2 13z', '#888', '#222') + line('M2 9L8 13 13 9M8 13V18M5 6L11 12', '#eee') + text(15, 7, 'y', '#222', 8, 'Liberation Sans') + text(15, 18, 'x', '#222', 8, 'Liberation Sans'),
  projFront: wire('#222') + line('M2 17L9 11M6 11H9V14', '#e22', 1.2),
  projTop: wire('#222') + line('M10 1V9M8 6L10 9L12 6', '#e22', 1.2),
  projSide: wire('#222') + line('M19 9H11M14 7L11 9L14 12', '#e22', 1.2),
  cubeC1: cubeC('M3 8L8 4H17L12 8z') + dot(17, 4, '#e33'),
  cubeC2: cubeC('M12 8L17 4V13L12 17z') + dot(12, 17, '#e33'),
  cubeC3: cubeC('M3 8H12V17H3z') + dot(12, 17, '#e33'),
  cubeC4: cubeC('M8 4H17L12 17H3z') + dot(17, 4, '#e33') + dot(3, 17, '#e33'),
  cutter: area('M3 3H13V8H3z', '#dd0', '#885') + line('M8 7V12M8 10L15 15M9 11L7 17', '#773', 1.5) + `<circle cx="7" cy="16" r="2" fill="none" stroke="#c33"/><circle cx="15" cy="15" r="2" fill="none" stroke="#c33"/>`,
  gridMove: line('M5 8H14V18M5 8V18M9 8V18M5 13H14M5 8L9 4H18V14M14 8L18 4M13 4V14M9 4V14M9 9H18', '#22c') + line('M1 3H7', '#e22', 2.5),
  zoom: lens,
  zoomOff: lens + line('M3 4L14 15M14 4L3 15', '#c22', 2),
  printer: area('M6 3H13L15 8H5z', '#fff', '#778') + area('M3 8H17V15H3z', '#b8c4d4', '#667') + line('M5 13H15', '#fff', 2),
  camera: cam + area('M13 16H19L16 19z', '#000'),
  cameraHtml: area('M3 8H17V18H3z', '#cde', '#345') + dot(9, 13, '#18a', 3) + text(3, 6, 'HTML', '#e22', 6, 'Liberation Sans'),
  ring1: reel('#7b5'),
  ring2: reel('#e88'),
  disc1: dot(10, 10, '#959595', 8) + dot(8, 9, '#8c8'),
  disc2: dot(10, 10, '#959595', 7) + dot(10, 10, '#b66'),
  fit: area('M5 6H15V15H5z', '#56c', '#224') + line('M5 11H15M10 6V15', '#fff') + sq(3, 4, '#e33') + sq(14, 4, '#e33') + sq(3, 14, '#e33') + sq(14, 14, '#e33'),
  dots: line('M5 3V17M9 3V17M13 3V17M17 3V17M3 5H18M3 9H18M3 13H18', '#bbb') + line('M2 17H18', '#cb8'),
  greenGrid: area('M2 2H18V18H2z', '#0b0', '#060') + area('M5 6H15V16H5z', '#fff', '#000') + line('M5 9H15M5 13H15M8 6V16M12 6V16', '#888'),
  folder1: folder,
  folder2: folder,
  panel: area('M2 7H18V14H2z', '#fff', '#222') + line('M4 9H8V12H4zM11 7V14M13 10H17', '#222', 1.5),
  dx: text(4, 14, 'DX', '#118022', 9, 'Liberation Sans'),
  clip: line('M10 9L13 4H18V8M7 12L12 11', '#22c', 1.5) + line('M11 7L16 3', '#777', 2) + dot(5, 12, '#e22') + dot(9, 17, '#e22') + dot(3, 17, '#e22') + sq(5, 10, '#22e'),
  palette2: area('M2 2H9V8H2z', '#67b', '#335') + area('M11 8L18 2V8z', '#dc4') + area('M2 11Q9 6 16 10L12 17H5z', '#888', '#333') + dot(6, 12, '#e33') + dot(11, 12, '#2b4') + area('M14 16H20L17 19z', '#000'),

  // dialog
  diag: area('M2 2H17V17H2z', '#00f') + area('M2 2H17L2 17z', '#f00'),
  bands: area('M2 2H18V7H2z', '#00f') + area('M2 6H18V13H2z', '#800080') + area('M2 13H18V17H2z', '#f00'),
  noTable: area('M4 3H18V17H4z', '#ccc', '#888') + line('M4 7H18M4 10H18M4 14H18M11 3V17', '#888') + line('M2 3L9 10M9 3L2 10', '#e11', 1.5),
  palette: area('M1 2H3V9H1z', '#f00') + area('M3 2H5V9H3z', '#fe0') + area('M5 2H7V9H5z', '#0cf') + area('M1 10H4V17H1z', '#00d') + area('M4 10H7V17H4z', '#0c0') + line('M1 2H8V17H1zM1 9H8', '#222') + line('M12 6H18V13H12z', '#222', 1.5),
  settings: area('M3 3H14V15H3z', '#aaa594', '#554') + area('M6 7H10V13H6z', '#fff') + `<circle cx="12" cy="12" r="4" fill="#fff" stroke="#25b" stroke-width="2.500"/>`,
  apply: line('M4 10L8 15 17 5', '#a0a0a0', 3),
  scissors: line('M3 3L8 16M9 3L4 16', '#39c', 1.5) + line('M4 10L8 17M8 10L4 17', '#c22', 1.5) + line('M12 10L17 4V16z', '#222', 1.5),
  mark: area('M3 4H18V18H3z', '#c8c8c8', '#aaa') + line('M4 8L9 14 16 3', '#e11', 3),
  plus: line('M2 2H18V18H2z', '#999', 2) + line('M5 10H15M10 5V15', '#226', 2),
  dash: line('M10 10H20', '#aaa', 2)
};
```

FILE: app.js
```javascript
let draw = function (name) {
  return '<svg viewBox="0 0 20 20" width="100%" height="100%" aria-hidden="true">' + icons[name] + '</svg>';
};

document.querySelectorAll('[data-icon]').forEach(function (el) {
  el.innerHTML = draw(el.dataset.icon);
});

// a star after the name means that the button is pressed
document.querySelectorAll('[data-tools]').forEach(function (el) {
  el.innerHTML = el.dataset.tools.split(' ').map(function (item) {
    let name = item.replace('*', '');
    let on = item.endsWith('*') ? ' tool-on' : '';

    return '<button class="tool' + on + '" aria-label="' + name + '">' + draw(name) + '</button>';
  }).join('');
});

// "+" has children, "v" is ticked, "-" has no tick box
let tree = [
  ['', 'Учитывать фрагмен'], ['v', 'Пропорциональное'], ['', 'Сохранять состояни'],
  ['', 'Показывать окно на'], ['', 'Показывать информ'], ['', 'Показывать общую'],
  ['v', 'Показывать имена'], ['+', 'Координационные о'], ['+', 'Размерные линии'],
  ['+', 'Удаление линий нев'], ['', 'Прозрачность'], ['', 'Освещение'],
  ['+-', 'Таблицы'], ['+v', 'Стержни'], ['+v', 'Пластины'], ['v', 'Объемные элемент'],
  ['+v', 'Специальные элеме'], ['+', 'Узлы'], ['+', 'Номера узлов'],
  ['+', 'Совпадающие узлы'], ['', 'Показывать удален'], ['', 'Цветовое отображе'],
  ['+', 'Связи'], ['', 'Показывать объеди'], ['+', 'Номера элементов'],
  ['', 'Цветовое отображе'], ['', 'Показывать группы'], ['', 'Показывать группы'],
  ['+', 'Типы элементов'], ['+', 'Номера типов жест'], ['+', 'Шарниры'],
  ['+', 'Жесткие вставки ст'], ['+', 'Отображение смещ'], ['', 'Показывать удален'],
  ['', 'Показывать совпад'], ['', 'Направление']
];

document.querySelector('.tree').innerHTML = tree.map(function (row) {
  let flags = row[0];
  let box = flags.includes('-') ? '' : '<input type="checkbox" class="check"' + (flags.includes('v') ? ' checked' : '') + '>';

  return '<li class="branch"><span class="expander">' + draw(flags.includes('+') ? 'plus' : 'dash') +
    '</span><label>' + box + row[1] + '</label></li>';
}).join('');

let limits = ['-48.1', '-42.71', '-37.31', '-31.91', '-26.52', '-21.12', '-15.73', '-10.33', '-4.93',
  '0.46', '5.86', '11.25', '16.65', '22.05', '27.44', '32.84', '38.23'];
let counts = [11044, 5535, 4328, 4024, 3999, 4427, 5402, 6467, 85678, 21749, 5526, 4601, 4388, 4635, 5756, 11734];
let colors = ['#00ff00', '#20ff00', '#40ff00', '#60ff00', '#88ff00', '#a8ff00', '#c8ff00', '#eeff00',
  '#eeee11', '#cccc33', '#aaaa55', '#888877', '#666699', '#4444bb', '#2222dd', '#0000ff'];
let most = Math.max(...counts);

document.querySelector('.scale tbody').innerHTML = counts.map(function (count, i) {
  let width = Math.round(count / most * 72) + 2;

  return '<tr><td class="mark">' + draw('mark') + '</td>' +
    '<td><span class="swatch" style="background:' + colors[i] + '"></span></td>' +
    '<td>' + limits[i] + '</td><td>' + limits[i + 1] + '</td><td class="count">' + count + '</td>' +
    '<td><span class="swatch" style="background:' + colors[i] + ';width:' + width + 'px"></span></td></tr>';
}).join('');
```
